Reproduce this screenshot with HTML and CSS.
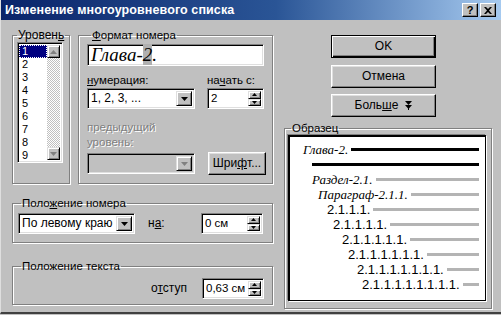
FILE: index.html
```html
<!DOCTYPE html>
<html lang="ru">
<head>
<meta charset="utf-8">
<link rel="stylesheet" href="styles.css">
</head>
<body>
<div class="win">
  <div class="title">
    <span class="title-text">Изменение многоуровневого списка</span>
    <span class="tb tb-help">?</span>
    <span class="tb tb-close"><svg width="8" height="7" viewBox="0 0 8 7"><path d="M0 0h2l2 2 2-2h2L5 3.5 8 7H6L4 5 2 7H0l3-3.5z" fill="#000"/></svg></span>
  </div>
  <div class="body">
    <div class="left">
      <div class="row1">
        <fieldset class="fs fs-level">
          <legend>Уровен<u>ь</u></legend>
          <div class="listbox">
            <div class="items">
              <div class="item sel"><span>1</span></div>
              <div class="item">2</div>
              <div class="item">3</div>
              <div class="item">4</div>
              <div class="item">5</div>
              <div class="item">6</div>
              <div class="item">7</div>
              <div class="item">8</div>
              <div class="item">9</div>
            </div>
            <div class="vscroll">
              <div class="sbtn"><svg width="7" height="4" viewBox="0 0 7 4"><path d="M3.5 0L7 4H0z" fill="#808080"/></svg></div>
              <div class="track"></div>
              <div class="sbtn"><svg width="7" height="4" viewBox="0 0 7 4"><path d="M0 0h7L3.5 4z" fill="#808080"/></svg></div>
            </div>
          </div>
        </fieldset>
        <fieldset class="fs fs-format">
          <legend><u>Ф</u>ормат номера</legend>
          <div class="fmt-field"><span>Глава-</span><span class="hl">2</span><span>.</span></div>
          <div class="fmt-grid">
            <div class="lbl"><u>н</u>умерация:</div>
            <div class="lbl">на<u>ч</u>ать с:</div>
            <div class="combo w-num"><span class="val">1, 2, 3, ...</span><span class="drop"><svg width="7" height="4" viewBox="0 0 7 4"><path d="M0 0h7L3.5 4z" fill="#000"/></svg></span></div>
            <div class="spin w-start"><span class="val">2</span><span class="spinbtns"><span class="sb"><svg width="5" height="3" viewBox="0 0 5 3"><path d="M2.5 0L5 3H0z" fill="#000"/></svg></span><span class="sb"><svg width="5" height="3" viewBox="0 0 5 3"><path d="M0 0h5L2.5 3z" fill="#000"/></svg></span></span></div>
            <div class="lbl dis prev">предыдущий<br>уровень:</div>
            <div></div>
            <div class="combo dis-combo w-num"><span class="val"></span><span class="drop"><svg width="7" height="4" viewBox="0 0 7 4"><path d="M0 0h7L3.5 4z" fill="#808080"/></svg></span></div>
            <div class="btn btn-font">Шри<u>ф</u>т...</div>
          </div>
        </fieldset>
      </div>
      <fieldset class="fs fs-pos">
        <legend>Поло<u>ж</u>ение номера</legend>
        <div class="pos-row">
          <div class="combo w-align"><span class="val">По левому краю</span><span class="drop"><svg width="7" height="4" viewBox="0 0 7 4"><path d="M0 0h7L3.5 4z" fill="#000"/></svg></span></div>
          <div class="lbl lbl-at">н<u>а</u>:</div>
          <div class="spin w-cm"><span class="val">0 см</span><span class="spinbtns"><span class="sb"><svg width="5" height="3" viewBox="0 0 5 3"><path d="M2.5 0L5 3H0z" fill="#000"/></svg></span><span class="sb"><svg width="5" height="3" viewBox="0 0 5 3"><path d="M0 0h5L2.5 3z" fill="#000"/></svg></span></span></div>
        </div>
      </fieldset>
      <fieldset class="fs fs-text">
        <legend>Положение текста</legend>
        <div class="text-row">
          <div class="lbl lbl-indent">о<u>т</u>ступ</div>
          <div class="spin w-cm"><span class="val">0,63 см</span><span class="spinbtns"><span class="sb"><svg width="5" height="3" viewBox="0 0 5 3"><path d="M2.5 0L5 3H0z" fill="#000"/></svg></span><span class="sb"><svg width="5" height="3" viewBox="0 0 5 3"><path d="M0 0h5L2.5 3z" fill="#000"/></svg></span></span></div>
        </div>
      </fieldset>
    </div>
    <div class="right">
      <div class="btns">
        <div class="btn btn-main btn-default">OK</div>
        <div class="btn btn-main">Отмена</div>
        <div class="btn btn-main">Боль<u>ш</u>е <svg class="more" width="7" height="9" viewBox="0 0 7 9"><path d="M0 0h7L3.5 4zM0 4h7L3.5 8z M3 7h1v2H3z" fill="#000"/></svg></div>
      </div>
      <fieldset class="fs fs-sample">
        <legend>Образец</legend>
        <div class="sample">
          <div class="sr" style="padding-left:14px"><span class="t it">Глава-2.</span><span class="ln blk"></span></div>
          <div class="sr" style="padding-left:23px"><span class="ln blk first"></span></div>
          <div class="sr" style="padding-left:23px"><span class="t it">Раздел-2.1.</span><span class="ln"></span></div>
          <div class="sr" style="padding-left:29px"><span class="t it">Параграф-2.1.1.</span><span class="ln"></span></div>
          <div class="sr" style="padding-left:38px"><span class="t">2.1.1.1.</span><span class="ln"></span></div>
          <div class="sr" style="padding-left:44px"><span class="t">2.1.1.1.1.</span><span class="ln"></span></div>
          <div class="sr" style="padding-left:53px"><span class="t">2.1.1.1.1.1.</span><span class="ln"></span></div>
          <div class="sr" style="padding-left:59px"><span class="t">2.1.1.1.1.1.1.</span><span class="ln"></span></div>
          <div class="sr" style="padding-left:68px"><span class="t">2.1.1.1.1.1.1.1.</span><span class="ln"></span></div>
          <div class="sr" style="padding-left:73px"><span class="t">2.1.1.1.1.1.1.1.1.</span><span class="ln"></span></div>
        </div>
      </fieldset>
    </div>
  </div>
</div>
</body>
</html>
```
FILE: styles.css
```css
* { box-sizing: border-box; }
html, body { margin: 0; padding: 0; }
body {
  background: #c0c0c0;
  font: 11.5px/13px "Liberation Sans", Arial, sans-serif;
  color: #000;
}
u { text-decoration: underline; text-underline-offset: 1px; }

.win {
  width: 501px;
  height: 314px;
  background: #c0c0c0;
  border-left: 1px solid #dfdfdf;
  border-bottom: 2px solid #404040;
  overflow: hidden;
}

.title {
  height: 20px;
  display: flex;
  align-items: center;
  padding: 0 5px 0 4px;
  background: linear-gradient(to right, #0a246a 0%, #2a5596 55%, #a6caf0 100%);
}
.title-text {
  flex: 1;
  color: #fff;
  font-weight: bold;
  font-size: 12.5px;
  letter-spacing: 0.1px;
}
.tb {
  width: 16px;
  height: 14px;
  margin-left: 2px;
  background: #c0c0c0;
  border: 1px solid;
  border-color: #fff #000 #000 #fff;
  box-shadow: inset -1px -1px #808080;
  display: flex;
  align-items: center;
  justify-content: center;
  font-weight: bold;
  font-size: 11px;
  line-height: 12px;
}

.body {
  display: flex;
  padding: 9px 0 0 11px;
}
.left { width: 261px; display: flex; flex-direction: column; }
.right { width: 208px; margin-left: 11px; display: flex; flex-direction: column; }

.fs {
  margin: 0;
  padding: 0;
  min-width: 0;
  border: 1px solid #808080;
  box-shadow: inset 1px 1px #fff, 1px 1px #fff;
}
.fs legend {
  padding: 0 1px;
  margin-left: 3px;
  line-height: 13px;
}

.row1 { display: flex; }
.fs-level { width: 58px; padding: 0 0 0 4px; }
.fs-level legend { margin-left: 0; font-size: 12px; }
.fs-format { width: 195px; margin-left: 8px; padding: 2px 8px 8px 8px; }
.fs-format legend { margin-left: 4px; }

.listbox {
  width: 46px;
  height: 121px;
  display: flex;
  background: #fff;
  padding: 2px;
  border: 1px solid;
  border-color: #808080 #fff #fff #808080;
  box-shadow: inset 1px 1px #000, inset -1px -1px #dfdfdf;
}
.items { flex: 1; }
.item { height: 13px; line-height: 13px; padding-left: 2px; font-size: 11px; }
.item.sel { background: #000080; color: #fff; outline: 1px dotted #fff; outline-offset: -1px; margin-left: -1px; padding-left: 3px; }
.vscroll { width: 13px; display: flex; flex-direction: column; }
.sbtn {
  height: 13px;
  background: #c0c0c0;
  border: 1px solid;
  border-color: #dfdfdf #000 #000 #dfdfdf;
  box-shadow: inset 1px 1px #fff, inset -1px -1px #808080;
  display: flex;
  align-items: center;
  justify-content: center;
}
.track {
  flex: 1;
  background: repeating-conic-gradient(#c0c0c0 0 25%, #fff 0 50%) 0 0 / 2px 2px;
}

.fmt-field {
  height: 22px;
  background: #fff;
  border: 1px solid;
  border-color: #808080 #fff #fff #808080;
  box-shadow: inset 1px 1px #000, inset -1px -1px #dfdfdf;
  font: italic 19px/20px "Liberation Serif", "Times New Roman", serif;
  padding-left: 3px;
  white-space: nowrap;
}
.fmt-field .hl { background: #b0b0b0; }

.fmt-grid {
  display: grid;
  grid-template-columns: 108px 57px;
  column-gap: 12px;
  margin-top: 8px;
}
.lbl { white-space: nowrap; }
.dis { color: #808080; text-shadow: 1px 1px #fff; }
.prev { line-height: 15px; margin-top: 11px; margin-bottom: 2px; }

.combo, .spin {
  height: 21px;
  display: flex;
  align-items: stretch;
  background: #fff;
  border: 1px solid;
  border-color: #808080 #fff #fff #808080;
  box-shadow: inset 1px 1px #000, inset -1px -1px #dfdfdf;
  padding: 2px;
  margin-top: 1px;
}
.val { flex: 1; padding-left: 1px; line-height: 15px; white-space: nowrap; overflow: hidden; font-size: 12px; }
.spin .val { font-size: 11.5px; }
.dis-combo { background: #c0c0c0; }
.drop {
  width: 16px;
  background: #c0c0c0;
  border: 1px solid;
  border-color: #dfdfdf #000 #000 #dfdfdf;
  box-shadow: inset 1px 1px #fff, inset -1px -1px #808080;
  display: flex;
  align-items: center;
  justify-content: center;
}
.spinbtns { width: 13px; display: flex; flex-direction: column; }
.sb {
  flex: 1;
  background: #c0c0c0;
  border: 1px solid;
  border-color: #dfdfdf #000 #000 #dfdfdf;
  box-shadow: inset 1px 1px #fff, inset -1px -1px #808080;
  display: flex;
  align-items: center;
  justify-content: center;
}

.btn {
  background: #c0c0c0;
  border: 1px solid;
  border-color: #fff #000 #000 #fff;
  box-shadow: inset -1px -1px #808080, inset 1px 1px #dfdfdf;
  display: flex;
  align-items: center;
  justify-content: center;
  font-size: 12px;
  white-space: nowrap;
}
.btn-font { height: 23px; width: 58px; margin-left: 1px; font-size: 12px; }

.fs-pos { margin-top: 13px; padding: 3px 8px 8px 5px; }
.pos-row { display: flex; align-items: center; }
.w-align { width: 117px; margin-top: 0; }
.lbl-at { width: 66px; padding-left: 13px; font-size: 12px; }
.w-cm { width: 62px; margin-top: 0; }

.fs-text { margin-top: 17px; padding: 5px 8px 5px 5px; }
.text-row { display: flex; align-items: center; justify-content: flex-end; }
.lbl-indent { margin-right: 15px; font-size: 12px; }

.btns { margin: 6px 0 0 47px; display: flex; flex-direction: column; }
.btn-main { width: 105px; height: 23px; }
.btn-main + .btn-main { margin-top: 6px; }
.btn-default { border-color: #000; box-shadow: inset 1px 1px #fff, inset -1px -1px #000, inset -2px -2px #808080; }
.btns .btn-main:nth-child(2) { margin-top: 7px; }
.more { margin-left: 7px; }

.fs-sample { margin-top: 5px; padding: 0 5px 7px 3px; }
.sample {
  height: 166px;
  background: #fff;
  border: 1px solid #000;
  box-shadow: -1px -1px #808080, 1px 1px #fff, inset 1px 1px #000;
  padding: 6px 6px 0 0;
}
.sr { height: 15px; display: flex; align-items: center; white-space: nowrap; }
.sr .t { font: 13px/15px "Liberation Sans", Arial, sans-serif; }
.sr .t.it { font: italic 13px/15px "Liberation Serif", "Times New Roman", serif; }
.ln { flex: 1; height: 3px; background: #b4b4b4; margin-left: 3px; }
.ln.blk { background: #000; }
.ln.first { margin-left: 0; }
```
